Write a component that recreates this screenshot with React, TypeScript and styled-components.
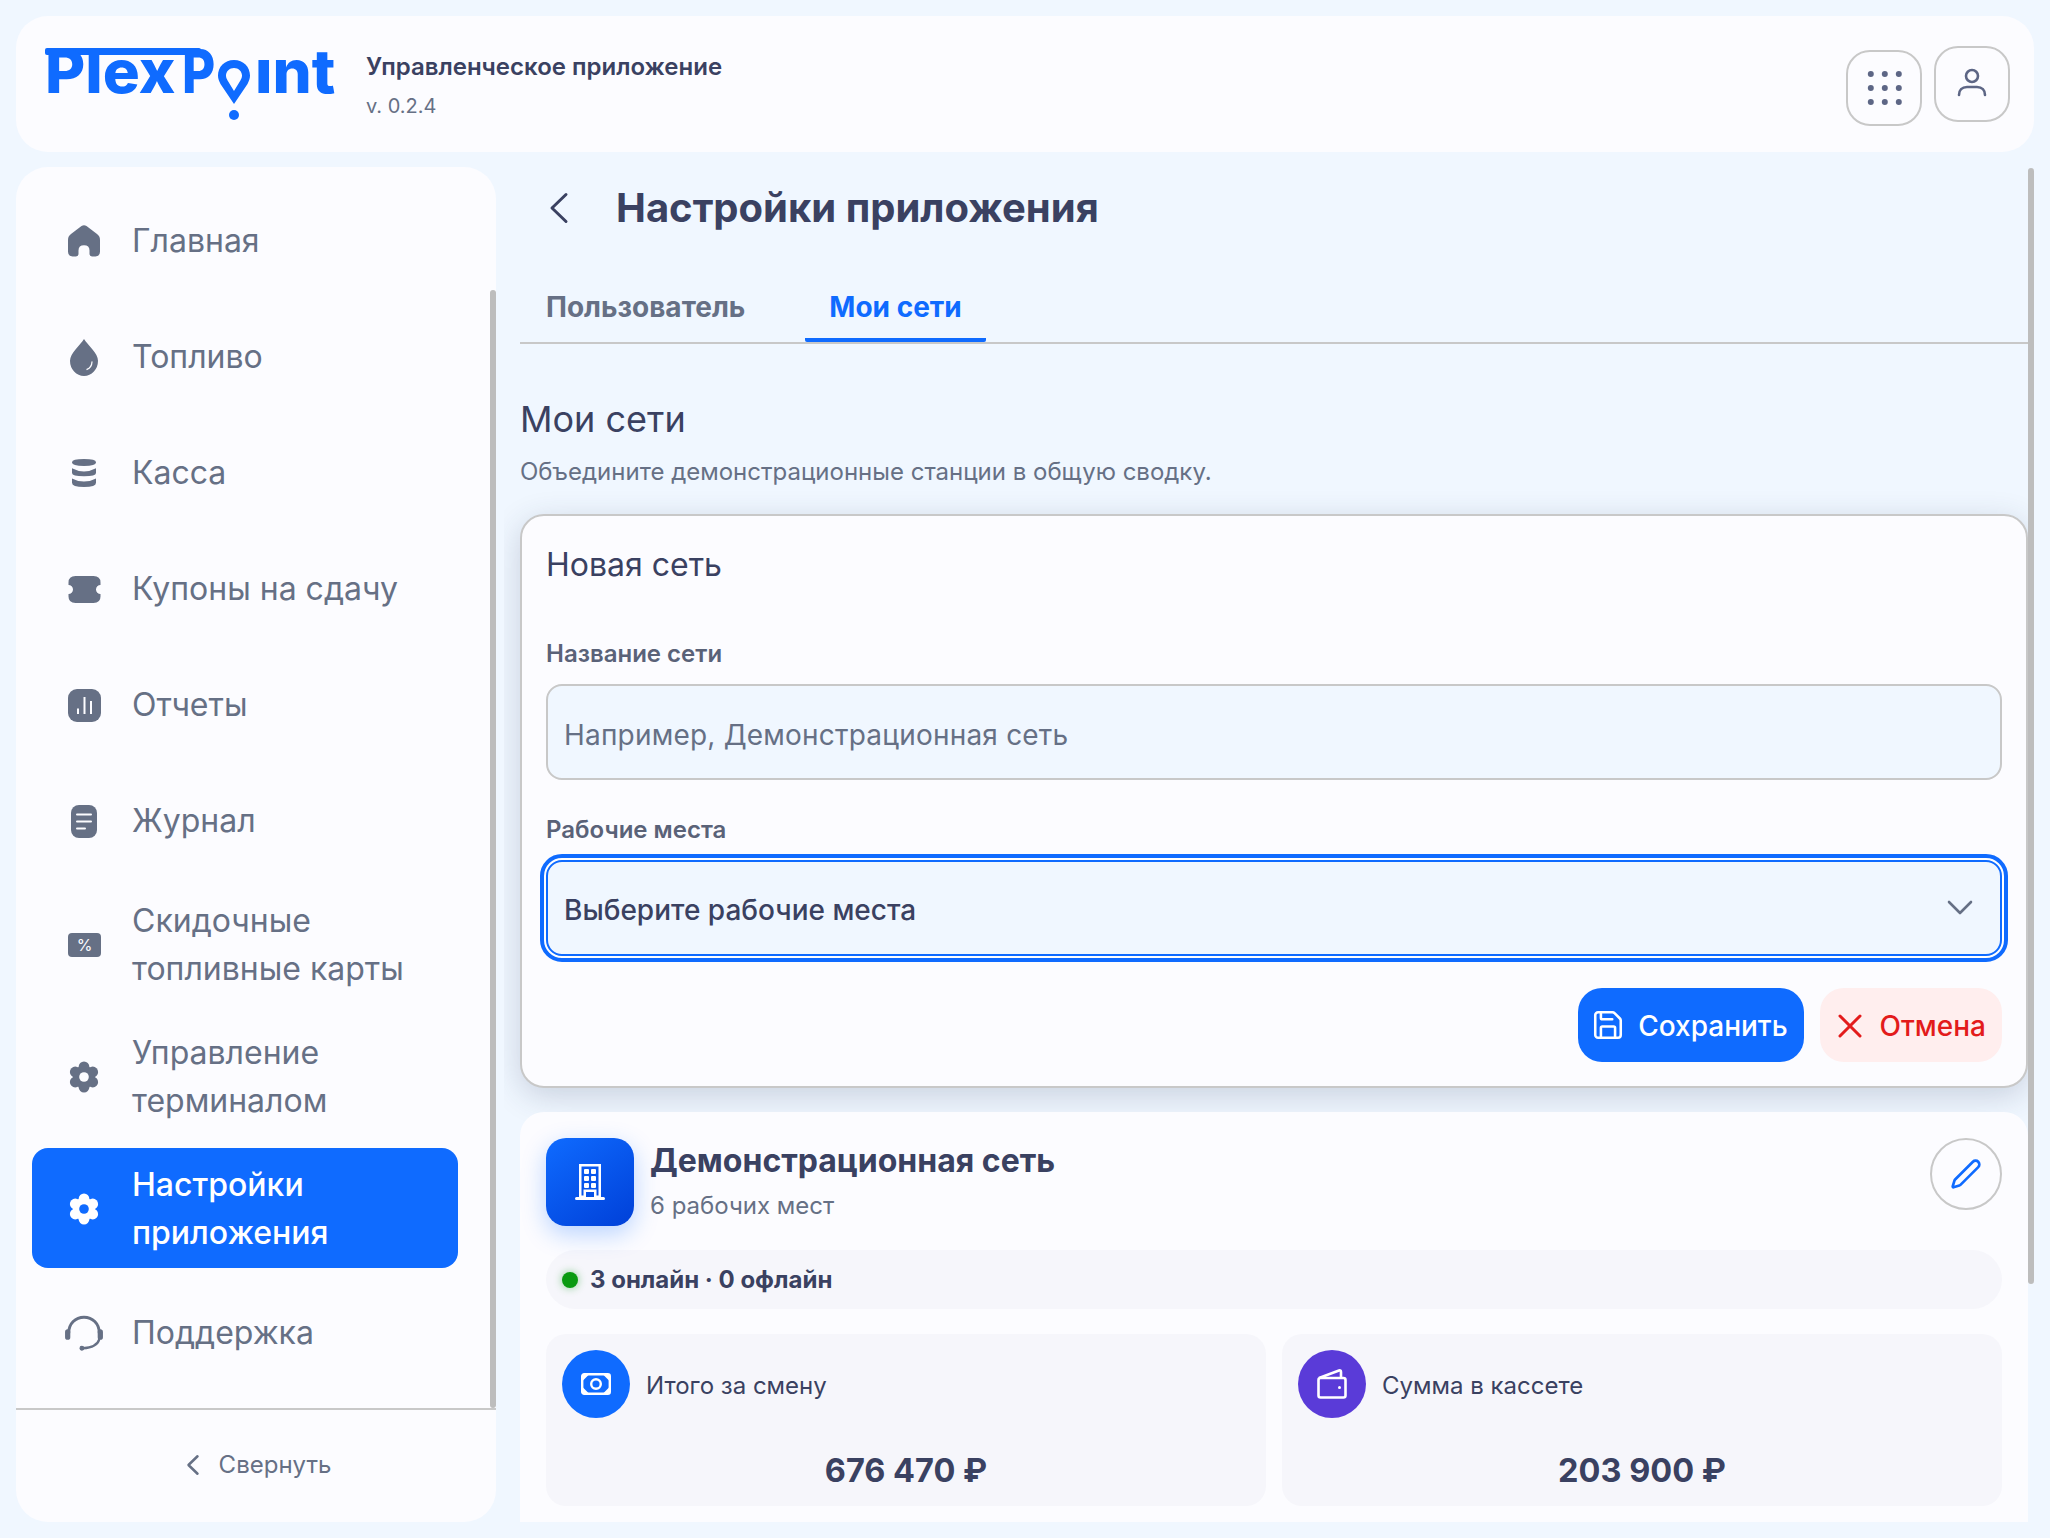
import React from 'react'
import styled, { createGlobalStyle } from 'styled-components'
import { Pen, Save } from 'lucide-react'

const blue = '#0f6bff'
const ink = '#3a4161'
const muted = '#667085'
const line = '#c8c8c8'
const panel = '#fcfcff'
const tint = '#f6f6fb'

const GlobalStyle = createGlobalStyle`
  html, body {
    margin: 0;
    padding: 0;
    background: #f0f7ff;
    overflow: hidden;
  }
  * {
    box-sizing: border-box;
  }
  body {
    font-family: Inter, "Noto Sans", sans-serif;
    color: ${ink};
  }
`

const Page = styled.div`
  width: 2050px;
  height: 1538px;
  padding: 16px;
  display: flex;
  flex-direction: column;
  gap: 15px;
`

const Header = styled.header`
  height: 136px;
  flex: none;
  background: ${panel};
  border-radius: 32px;
  padding: 0 24px 0 29px;
  display: flex;
  align-items: center;
`

const Brand = styled.div`
  display: flex;
  align-items: center;
  gap: 25px;
  flex: 1;
`

const LogoMark = styled.svg`
  margin-top: -16px;
  flex: none;
`

const AppInfo = styled.div`
  margin-top: 4px;
  display: flex;
  flex-direction: column;
  gap: 7px;
`

const AppName = styled.div`
  font-size: 24px;
  line-height: 32px;
  font-weight: 600;
  color: ${ink};
`

const AppVersion = styled.div`
  font-size: 20px;
  line-height: 32px;
  color: ${muted};
`

const HeaderActions = styled.div`
  display: flex;
  align-items: center;
  gap: 12px;
`

const SquareButton = styled.button<{ $shift?: number }>`
  width: 76px;
  height: 76px;
  margin-top: ${p => p.$shift || 0}px;
  background: transparent;
  border: 2px solid ${line};
  border-radius: 24px;
  padding: 0;
  display: flex;
  align-items: center;
  justify-content: center;
`

const Body = styled.div`
  flex: 1;
  min-height: 0;
  display: flex;
`

const Sidebar = styled.aside`
  width: 480px;
  flex: none;
  background: ${panel};
  border-radius: 32px;
  display: flex;
  flex-direction: column;
  overflow: hidden;
`

const NavArea = styled.nav`
  position: relative;
  flex: 1;
  padding: 22px 38px 0 16px;
  display: flex;
  flex-direction: column;
  gap: 12px;
`

const NavThumb = styled.div`
  position: absolute;
  right: 0;
  top: 123px;
  bottom: 0;
  width: 6px;
  border-radius: 3px;
  background: #bdbdbd;
`

const NavItem = styled.a<{ $active?: boolean }>`
  min-height: 104px;
  margin: ${p => (p.$active ? '-1px 0 1px' : '0')};
  padding: ${p => (p.$active ? '13px 24px 11px 32px' : '12px 24px 12px 32px')};
  border-radius: 16px;
  display: flex;
  align-items: center;
  gap: 28px;
  background: ${p => (p.$active ? blue : 'transparent')};
  color: ${p => (p.$active ? '#fff' : muted)};
  font-size: 32px;
  line-height: 48px;
  font-weight: ${p => (p.$active ? 500 : 400)};
`

const NavIcon = styled.span`
  width: 40px;
  height: 44px;
  flex: none;
  display: flex;
  align-items: center;
  justify-content: center;
`

const SidebarFooter = styled.div`
  height: 114px;
  flex: none;
  border-top: 2px solid ${line};
  padding: 0 0 3px 5px;
  display: flex;
  align-items: center;
  justify-content: center;
  gap: 19px;
  font-size: 24px;
  color: ${muted};
`

const Main = styled.main`
  position: relative;
  flex: 1;
  min-width: 0;
  margin-left: 8px;
  padding: 0 6px 0 16px;
  overflow: hidden;
`

const MainThumb = styled.div`
  position: absolute;
  right: 0;
  top: 1px;
  width: 6px;
  height: 1116px;
  border-radius: 3px;
  background: #bdbdbd;
`

const TitleRow = styled.div`
  height: 82px;
  padding-left: 29px;
  display: flex;
  align-items: center;
  gap: 47px;
`

const PageTitle = styled.h1`
  margin: 0;
  font-size: 40px;
  line-height: 48px;
  font-weight: 700;
  color: ${ink};
`

const Tabs = styled.div`
  margin-top: 21px;
  padding-left: 2px;
  height: 74px;
  border-bottom: 2px solid ${line};
  display: flex;
  gap: 36px;
`

const Tab = styled.div<{ $active?: boolean }>`
  height: 72px;
  padding: 6px 24px 0;
  margin-bottom: -2px;
  display: flex;
  align-items: center;
  font-size: 28px;
  font-weight: 700;
  color: ${p => (p.$active ? blue : muted)};
  border-bottom: 4px solid ${p => (p.$active ? blue : 'transparent')};
  border-radius: 0 0 2px 2px;
`

const SectionTitle = styled.h2`
  margin: 53px 0 15px;
  font-size: 36px;
  line-height: 44px;
  font-weight: 400;
  color: ${ink};
`

const SectionHint = styled.p`
  margin: 0 0 26px;
  font-size: 24px;
  line-height: 32px;
  color: ${muted};
`

const FormCard = styled.section`
  background: ${panel};
  border: 2px solid ${line};
  border-radius: 24px;
  padding: 29px 24px 24px;
  box-shadow: 0 8px 32px rgba(40, 55, 90, 0.2);
`

const FormTitle = styled.h3`
  margin: 0 0 53px;
  font-size: 32px;
  line-height: 40px;
  font-weight: 400;
  color: ${ink};
`

const FieldLabel = styled.label`
  display: block;
  margin-bottom: 14px;
  font-size: 24px;
  line-height: 32px;
  font-weight: 600;
  color: #5a6278;
`

const TextInput = styled.input`
  display: block;
  width: 100%;
  height: 96px;
  margin-bottom: 34px;
  padding: 5px 16px 0;
  background: #f0f7ff;
  border: 2px solid ${line};
  border-radius: 16px;
  font: 400 28px Inter, sans-serif;
  letter-spacing: 0.2px;
  color: ${ink};
  &::placeholder {
    color: ${muted};
    opacity: 1;
  }
`

const SelectBox = styled.div`
  height: 96px;
  padding: 4px 27px 0 16px;
  background: #f0f7ff;
  border: 2px solid ${blue};
  border-radius: 16px;
  outline: 4px solid ${blue};
  outline-offset: 2px;
  box-shadow: 0 0 0 2px #fff;
  display: flex;
  align-items: center;
  justify-content: space-between;
  font-size: 28px;
  font-weight: 500;
  color: ${ink};
`

const SelectArrow = styled.span`
  margin-top: -5px;
  display: flex;
`

const FormActions = styled.div`
  margin-top: 32px;
  display: flex;
  justify-content: flex-end;
  gap: 16px;
`

const ActionButton = styled.button<{ $danger?: boolean }>`
  height: 74px;
  padding: 2px 16px 0 ${p => (p.$danger ? 18 : 16)}px;
  border: none;
  border-radius: 24px;
  display: flex;
  align-items: center;
  gap: ${p => (p.$danger ? 18 : 12)}px;
  background: ${p => (p.$danger ? '#ffeeee' : blue)};
  color: ${p => (p.$danger ? '#e31b1b' : '#fff')};
  font: 500 28px Inter, sans-serif;
`

const SaveIcon = styled(Save)`
  margin: -2px 1px 0 -3px;
`

const NetworkCard = styled.section`
  margin-top: 24px;
  background: ${panel};
  border-radius: 24px;
  padding: 26px 26px 60px;
`

const NetworkHead = styled.div`
  display: flex;
  align-items: flex-start;
  gap: 16px;
`

const BuildingBadge = styled.div`
  width: 88px;
  height: 88px;
  flex: none;
  border-radius: 20px;
  background: linear-gradient(145deg, ${blue}, #0040d8);
  box-shadow: 0 8px 24px rgba(15, 107, 255, 0.28);
  display: flex;
  align-items: center;
  justify-content: center;
`

const NetworkInfo = styled.div`
  flex: 1;
  display: flex;
  flex-direction: column;
`

const NetworkName = styled.div`
  margin-top: 3px;
  font-size: 32px;
  line-height: 40px;
  font-weight: 700;
  color: ${ink};
`

const NetworkMeta = styled.div`
  margin-top: 9px;
  font-size: 24px;
  line-height: 32px;
  color: ${muted};
`

const EditButton = styled.button`
  width: 72px;
  height: 72px;
  flex: none;
  border-radius: 50%;
  border: 2px solid ${line};
  background: transparent;
  color: ${blue};
  padding: 0;
  display: flex;
  align-items: center;
  justify-content: center;
`

const StatusPill = styled.div`
  margin-top: 24px;
  height: 59px;
  padding: 0 16px;
  border-radius: 30px;
  background: ${tint};
  display: flex;
  align-items: center;
  gap: 12px;
  font-size: 24px;
  font-weight: 700;
  color: ${ink};
`

const StatusDot = styled.span`
  width: 16px;
  height: 16px;
  border-radius: 50%;
  background: #0a9a10;
  box-shadow: 0 0 8px rgba(10, 154, 16, 0.45);
`

const StatGrid = styled.div`
  margin-top: 25px;
  display: grid;
  grid-template-columns: 1fr 1fr;
  gap: 16px;
`

const StatCard = styled.div`
  height: 172px;
  padding: 16px;
  background: ${tint};
  border-radius: 20px;
`

const StatHead = styled.div`
  display: flex;
  align-items: center;
  gap: 16px;
  font-size: 24px;
  color: ${ink};
`

const StatLabel = styled.span`
  margin-top: 2px;
`

const StatIcon = styled.span<{ $color: string }>`
  width: 68px;
  height: 68px;
  flex: none;
  border-radius: 50%;
  background: ${p => p.$color};
  display: flex;
  align-items: center;
  justify-content: center;
`

const StatValue = styled.div`
  margin-top: 31px;
  text-align: center;
  font-size: 32.500px;
  line-height: 44px;
  font-weight: 700;
  color: ${ink};
`

const Logo = () => (
  <LogoMark width="296" height="88" viewBox="0 -16 296 88" fill={blue} fontFamily="Inter, sans-serif" fontWeight="800" fontSize="60">
    <rect x="0" y="0" width="156" height="7" rx="2" />
    <g transform="scale(1.03 1)">
      <text x="0" y="45">Plex</text>
    </g>
    <g transform="translate(137 0) scale(0.85 1)">
      <text x="0" y="45">P</text>
    </g>
    <path
      fillRule="evenodd"
      d="M189 12c9.500 0 16 7 16 15.500 0 3-1 5.500-2.500 8.500L189 56l-13.500-20c-1.500-3-2.500-5.500-2.500-8.500C173 19 179.500 12 189 12zm0 8c-4.500 0-8 3.500-8 7.500 0 2 .8 3.500 1.600 5L189 43l6.400-10.500c.8-1.500 1.600-3 1.600-5 0-4-3.500-7.500-8-7.500z"
    />
    <circle cx="189" cy="67" r="5" />
    <g transform="translate(210 0) scale(1.03 1)">
      <text x="0" y="45">ınt</text>
    </g>
  </LogoMark>
)

const DotsIcon = () => (
  <svg width="36" height="36" viewBox="0 0 36 36" fill="#5d6685">
    {[4, 18, 32].map(y =>
      [4, 18, 32].map(x => <circle key={`${x}-${y}`} cx={x + 0.800} cy={y} r="3" />)
    )}
  </svg>
)

const UserIcon = () => (
  <svg width="32" height="32" viewBox="0 0 32 32" fill="none" stroke="#5d6685" strokeWidth="2.600" strokeLinecap="round">
    <circle cx="16" cy="8" r="6" />
    <path d="M3 27c0-5 3-8 8-8h10c5 0 8 3 8 8" />
  </svg>
)

const HomeIcon = () => (
  <svg width="32" height="32" viewBox="0 0 32 30" preserveAspectRatio="none" fill="currentColor">
    <path d="M13.500 1Q16-.5 18.500 1L29 8.500Q32 10.500 32 14V25Q32 29.500 27.500 29.500H24Q21.500 29.500 21.500 27V24Q21.500 19 16 19Q10.500 19 10.500 24V27Q10.500 29.500 8 29.500H4.500Q0 29.500 0 25V14Q0 10.500 3 8.500Z" />
  </svg>
)

const DropIcon = () => (
  <svg width="28" height="37" viewBox="0 0 28 34" preserveAspectRatio="none" fill="currentColor">
    <path d="M14 0C18 6 28 13 28 20A14 14 0 0 1 0 20C0 13 10 6 14 0Z" />
    <path d="M22 21A8 8 0 0 1 17 28" fill="none" stroke="#fcfcff" strokeWidth="1.200" strokeLinecap="round" />
  </svg>
)

const CoinsIcon = () => (
  <svg width="24" height="28" viewBox="0 0 24 26" preserveAspectRatio="none" fill="currentColor">
    <path d="M0 3Q0 0 12 0Q24 0 24 3Q24 6.500 12 6.500Q0 6.500 0 3Z" />
    <path d="M0 8.500Q6 11.500 12 11.500Q18 11.500 24 8.500V13Q24 16 12 16Q0 16 0 13Z" />
    <path d="M0 18Q6 21 12 21Q18 21 24 18V22Q24 26 12 26Q0 26 0 22Z" />
  </svg>
)

const TicketIcon = () => (
  <svg width="33" height="27" viewBox="0 0 32 27" fill="currentColor">
    <path d="M7 0H25Q32 0 32 6.500V9A4.500 4.500 0 0 0 32 18V20.500Q32 27 25 27H7Q0 27 0 20.500V18A4.500 4.500 0 0 0 0 9V6.500Q0 0 7 0Z" />
  </svg>
)

const ChartIcon = () => (
  <svg width="33" height="33" viewBox="0 0 33 33">
    <rect width="33" height="33" rx="9" fill="currentColor" />
    <path d="M10 19.500V25M16.500 8V25M23 12V25" stroke="#fcfcff" strokeWidth="2" />
  </svg>
)

const DocIcon = () => (
  <svg width="26" height="33" viewBox="0 0 26 33">
    <rect width="26" height="33" rx="8" fill="currentColor" />
    <path d="M6 9.500H20M6 16.500H20M6 23.500H14" stroke="#fcfcff" strokeWidth="2" strokeLinecap="round" />
  </svg>
)

const DiscountIcon = () => (
  <svg width="33" height="24" viewBox="0 0 33 24">
    <rect width="33" height="24" rx="4" fill="currentColor" />
    <text x="16.500" y="17.500" textAnchor="middle" fontSize="16" fontFamily="Inter, sans-serif" fill="#fcfcff">%</text>
  </svg>
)

const GearIcon = ({ hole }: { hole: string }) => {
  const lobes = [90, 30, -30, -90, -150, 150].map(a => (a * Math.PI) / 180)
  return (
    <svg width="32" height="32" viewBox="0 0 30 30" fill="currentColor">
      <circle cx="15" cy="15" r="10.500" />
      {lobes.map(a => (
        <circle key={a} cx={15 + 9.500 * Math.cos(a)} cy={15 + 9.500 * Math.sin(a)} r="5" />
      ))}
      <circle cx="15" cy="15" r="4.500" fill={hole} />
    </svg>
  )
}

const HeadsetIcon = () => (
  <svg width="40" height="36" viewBox="0 0 38 34" fill="none" stroke="currentColor" strokeLinecap="round">
    <path d="M4.500 17C4.500 8 11 2 19 2S33.500 8 33.500 17" strokeWidth="2.800" />
    <path d="M3.500 16V21M34.500 16V21" strokeWidth="5" />
    <path d="M33.500 23C32 28 26 31 18 31.500" strokeWidth="2.200" />
    <circle cx="17" cy="31.500" r="1.800" fill="currentColor" strokeWidth="1" />
  </svg>
)

const ChevronLeft = ({ w, h, sw, color }: { w: number; h: number; sw: number; color: string }) => (
  <svg width={w} height={h} viewBox={`0 0 ${w} ${h}`} fill="none" stroke={color} strokeWidth={sw} strokeLinecap="round" strokeLinejoin="round">
    <path d={`M${w - sw} ${sw / 2 + 1}L${sw} ${h / 2}L${w - sw} ${h - sw / 2 - 1}`} />
  </svg>
)

const ChevronDown = () => (
  <svg width="26" height="15" viewBox="0 0 26 15" fill="none" stroke={muted} strokeWidth="2.600" strokeLinecap="round" strokeLinejoin="round">
    <path d="M2 2L13 13L24 2" />
  </svg>
)

const CloseIcon = () => (
  <svg width="24" height="24" viewBox="0 0 24 24" fill="none" stroke="#e31b1b" strokeWidth="3" strokeLinecap="round">
    <path d="M2 2L22 22M22 2L2 22" />
  </svg>
)

const BuildingIcon = () => (
  <svg width="30" height="38" viewBox="0 0 30 38" fill="#fff">
    <path d="M4 1H26V35H19V29H11V35H4ZM6.500 3.500V32.500H8.500V26.500H21.500V32.500H23.500V3.500Z" fillRule="evenodd" />
    <rect x="0" y="34" width="30" height="3" rx="1.500" />
    <rect x="9" y="6" width="5" height="5" rx="1" />
    <rect x="16" y="6" width="5" height="5" rx="1" />
    <rect x="9" y="13" width="5" height="5" rx="1" />
    <rect x="16" y="13" width="5" height="5" rx="1" />
    <rect x="9" y="20" width="5" height="5" rx="1" />
    <rect x="16" y="20" width="5" height="5" rx="1" />
  </svg>
)

const MoneyIcon = () => (
  <svg width="30" height="22" viewBox="0 0 30 22" fill="none" stroke="#fff" strokeWidth="2.400">
    <rect x="1.200" y="1.200" width="27.600" height="19.600" rx="2" />
    <circle cx="15" cy="11" r="4.800" />
    <path d="M2 2H7.500L2 7.500ZM28 2H22.500L28 7.500ZM2 20H7.500L2 14.500ZM28 20H22.500L28 14.500Z" fill="#fff" stroke="none" />
  </svg>
)

const WalletIcon = () => (
  <svg width="30" height="30" viewBox="0 0 30 30" fill="none" stroke="#fff" strokeWidth="2.600" strokeLinejoin="round">
    <path d="M2 9L22 1.500Q24 1 24 3V9" />
    <rect x="1.500" y="9" width="27" height="19.500" rx="2" />
    <circle cx="22.500" cy="18.500" r="1.500" fill="#fff" stroke="none" />
  </svg>
)

const navItems: { label: string; icon: React.ReactNode; active?: boolean }[] = [
  { label: 'Главная', icon: <HomeIcon /> },
  { label: 'Топливо', icon: <DropIcon /> },
  { label: 'Касса', icon: <CoinsIcon /> },
  { label: 'Купоны на сдачу', icon: <TicketIcon /> },
  { label: 'Отчеты', icon: <ChartIcon /> },
  { label: 'Журнал', icon: <DocIcon /> },
  { label: 'Скидочные топливные карты', icon: <DiscountIcon /> },
  { label: 'Управление терминалом', icon: <GearIcon hole={panel} /> },
  { label: 'Настройки приложения', icon: <GearIcon hole={blue} />, active: true },
  { label: 'Поддержка', icon: <HeadsetIcon /> },
]

const App: React.FC = () => {
  return (
    <Page>
      <GlobalStyle />
      <Header>
        <Brand>
          <Logo />
          <AppInfo>
            <AppName>Управленческое приложение</AppName>
            <AppVersion>v. 0.2.4</AppVersion>
          </AppInfo>
        </Brand>
        <HeaderActions>
          <SquareButton $shift={8}><DotsIcon /></SquareButton>
          <SquareButton><UserIcon /></SquareButton>
        </HeaderActions>
      </Header>
      <Body>
        <Sidebar>
          <NavArea>
            {navItems.map(item => (
              <NavItem key={item.label} $active={item.active}>
                <NavIcon>{item.icon}</NavIcon>
                <span>{item.label}</span>
              </NavItem>
            ))}
            <NavThumb />
          </NavArea>
          <SidebarFooter>
            <ChevronLeft w={14} h={22} sw={2.500} color={muted} />
            Свернуть
          </SidebarFooter>
        </Sidebar>
        <Main>
          <MainThumb />
          <TitleRow>
            <ChevronLeft w={20} h={32} sw={3} color={ink} />
            <PageTitle>Настройки приложения</PageTitle>
          </TitleRow>
          <Tabs>
            <Tab>Пользователь</Tab>
            <Tab $active>Мои сети</Tab>
          </Tabs>
          <SectionTitle>Мои сети</SectionTitle>
          <SectionHint>Объедините демонстрационные станции в общую сводку.</SectionHint>
          <FormCard>
            <FormTitle>Новая сеть</FormTitle>
            <FieldLabel>Название сети</FieldLabel>
            <TextInput placeholder="Например, Демонстрационная сеть" />
            <FieldLabel>Рабочие места</FieldLabel>
            <SelectBox>
              Выберите рабочие места
              <SelectArrow><ChevronDown /></SelectArrow>
            </SelectBox>
            <FormActions>
              <ActionButton>
                <SaveIcon size={34} strokeWidth={1.800} />
                Сохранить
              </ActionButton>
              <ActionButton $danger>
                <CloseIcon />
                Отмена
              </ActionButton>
            </FormActions>
          </FormCard>
          <NetworkCard>
            <NetworkHead>
              <BuildingBadge><BuildingIcon /></BuildingBadge>
              <NetworkInfo>
                <NetworkName>Демонстрационная сеть</NetworkName>
                <NetworkMeta>6 рабочих мест</NetworkMeta>
              </NetworkInfo>
              <EditButton><Pen size={32} strokeWidth={2} /></EditButton>
            </NetworkHead>
            <StatusPill>
              <StatusDot />
              3 онлайн · 0 офлайн
            </StatusPill>
            <StatGrid>
              <StatCard>
                <StatHead>
                  <StatIcon $color={blue}><MoneyIcon /></StatIcon>
                  <StatLabel>Итого за смену</StatLabel>
                </StatHead>
                <StatValue>676 470 ₽</StatValue>
              </StatCard>
              <StatCard>
                <StatHead>
                  <StatIcon $color="#5a3bd8"><WalletIcon /></StatIcon>
                  <StatLabel>Сумма в кассете</StatLabel>
                </StatHead>
                <StatValue>203 900 ₽</StatValue>
              </StatCard>
            </StatGrid>
          </NetworkCard>
        </Main>
      </Body>
    </Page>
  )
}

export default App
